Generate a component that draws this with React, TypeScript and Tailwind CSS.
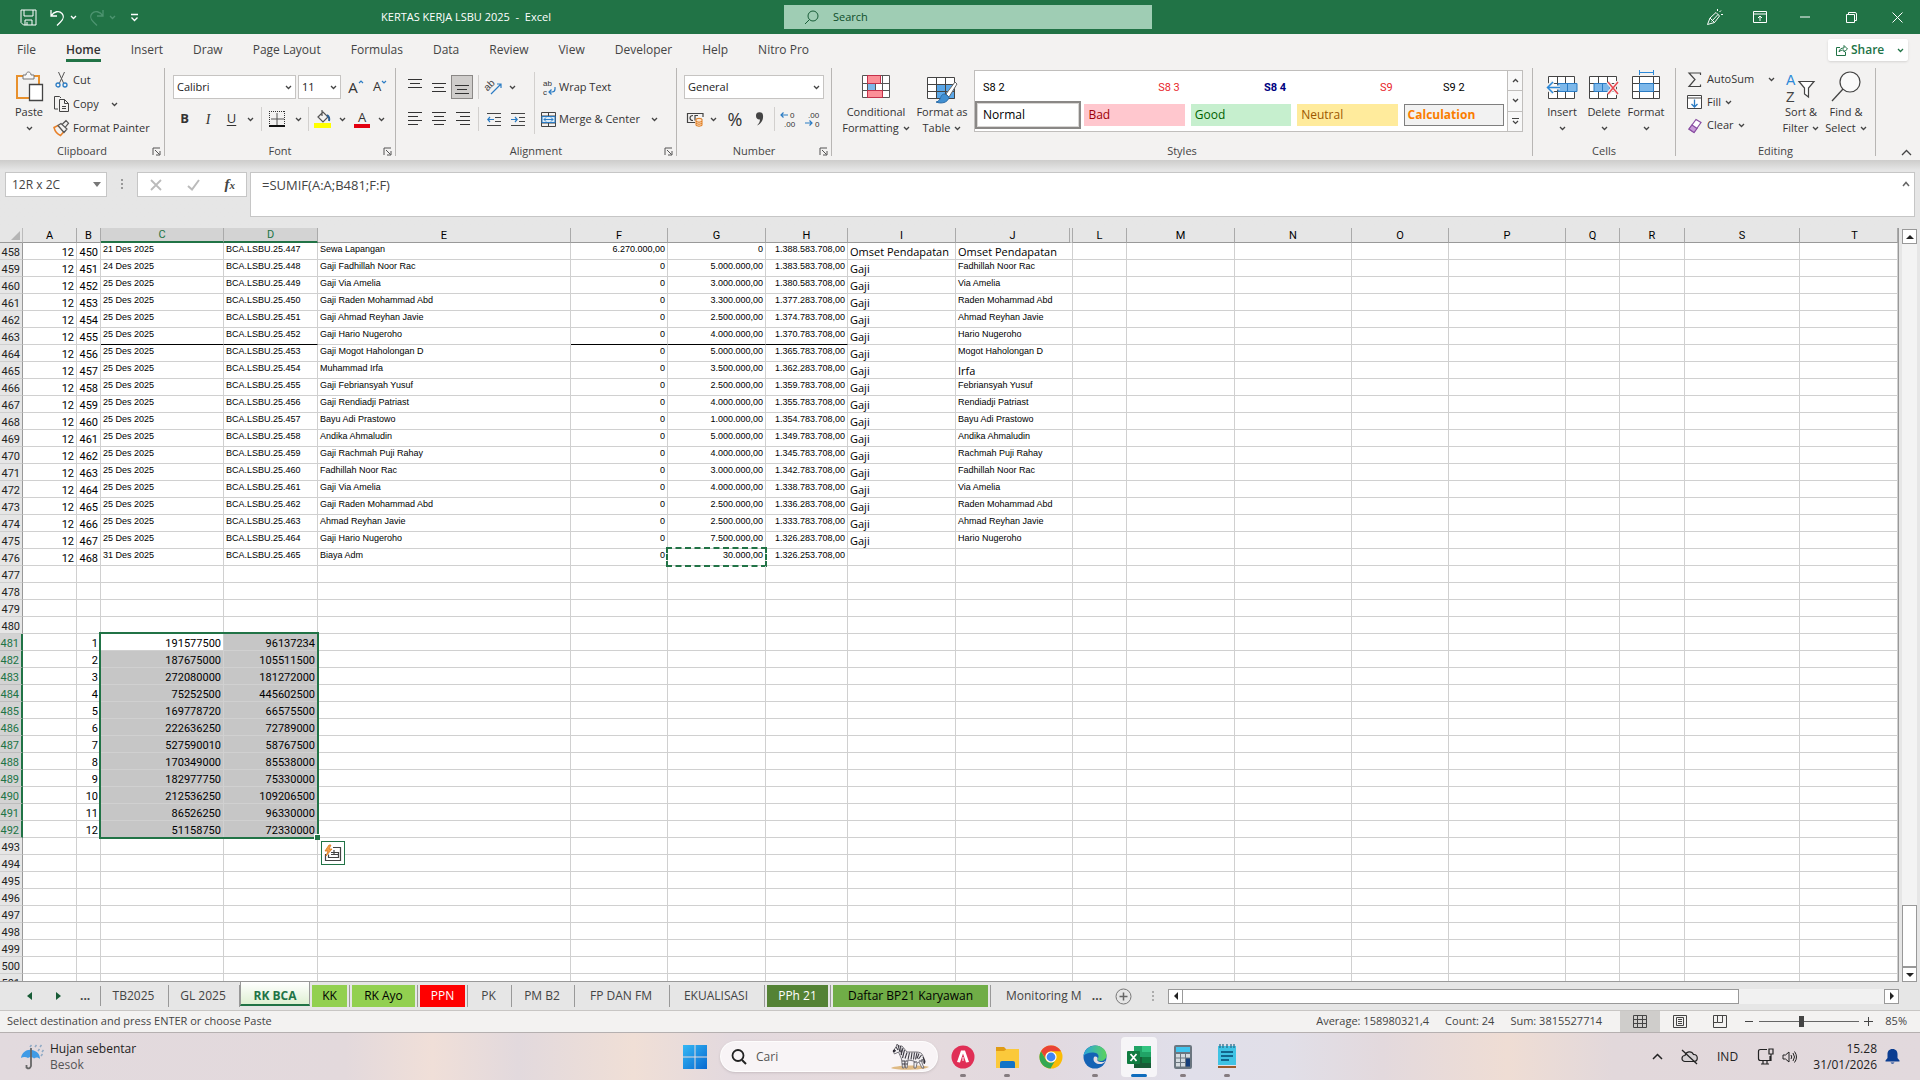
import React from "react";

const UI = "font-['Open_Sans','Noto_Sans',sans-serif]";

type Kids = { children?: React.ReactNode };

function Svg({ w, h, className = "", children, fill = "none" }: { w: number; h: number; className?: string; fill?: string } & Kids) {
  return (
    <svg width={w} height={h} viewBox={`0 0 ${w} ${h}`} fill={fill} className={`shrink-0 overflow-visible font-['Liberation_Sans',sans-serif] ${className}`} aria-hidden="true">
      {children}
    </svg>
  );
}

function Chev({ className = "text-[#444]" }: { className?: string }) {
  return (
    <Svg w={7} h={5} className={className}>
      <path d="M1 1l2.5 2.5L6 1" stroke="currentColor" strokeWidth="1.3" />
    </Svg>
  );
}

function Lines({ rows, top = 0 }: { rows: [number, number][]; top?: number }) {
  return (
    <Svg w={14} h={16}>
      {rows.map(([x, w], i) => (
        <rect key={i} x={x} y={top + i * 4} width={w} height="1" fill="#333" />
      ))}
    </Svg>
  );
}

function Launcher() {
  return (
    <button aria-label="Dialog launcher" className="absolute right-[3px] bottom-0">
      <Svg w={9} h={9}>
        <path d="M8 1H1v7M3 3l4.5 4.5M8 4v4H4" stroke="#555" />
      </Svg>
    </button>
  );
}

function Group({ label, className, launcher, children }: { label: string; className: string; launcher?: boolean } & Kids) {
  return (
    <section className={`relative flex h-[88px] flex-col border-r border-[#b8b6b4] ${className}`}>
      <div className="flex h-[78px] min-w-0 shrink-0">{children}</div>
      <h2 className="flex h-[10px] items-center justify-center text-[11px] leading-[10px] text-[#444]">{label}</h2>
      {launcher && <Launcher />}
    </section>
  );
}

function Slot({ className, label, children }: { className: string; label: string } & Kids) {
  return (
    <button aria-label={label} className={`flex h-6 shrink-0 items-center justify-center ${className}`}>
      {children}
    </button>
  );
}

function Sep({ className = "" }: { className?: string }) {
  return <span className={`h-6 w-px shrink-0 bg-[#d2d0ce] ${className}`} />;
}

function Big({ className, icon, lines, chevBelow }: { className: string; icon: React.ReactNode; lines: string[]; chevBelow?: boolean }) {
  return (
    <button className={`flex shrink-0 flex-col items-center pt-[2px] text-[11px] leading-4 text-[#333] ${className}`}>
      <span className="flex h-[34px] items-center">{icon}</span>
      {lines.map((l, i) => (
        <span key={l} className="flex items-center gap-1 whitespace-nowrap">
          {l}
          {!chevBelow && i === lines.length - 1 && <Chev />}
        </span>
      ))}
      {chevBelow && (
        <span className="flex h-4 items-center">
          <Chev />
        </span>
      )}
    </button>
  );
}

const menus = ["File", "Home", "Insert", "Draw", "Page Layout", "Formulas", "Data", "Review", "View", "Developer", "Help", "Nitro Pro"];

function TitleBar() {
  return (
    <header className="flex h-[34px] shrink-0 items-center bg-[#217346] text-white">
      <div className="flex flex-1 basis-0 items-center">
        <div className="flex w-[320px] items-center pl-5">
          <button aria-label="Save" className="w-[29px]">
            <Svg w={17} h={17}>
              <path d="M1 1h15v15H3.500L1 13.500zM4 1v6h9V1M5 16v-5h7v5M7 13v3" stroke="#fff" />
            </Svg>
          </button>
          <button aria-label="Undo" className="flex w-[39px] items-center gap-1">
            <Svg w={17} h={17}>
              <path d="M2 1v6h6M2 7C5 2.500 10 1 13 4.500s1 6-1.500 8.500L8 16.500" stroke="#fff" strokeWidth="1.300" />
            </Svg>
            <Chev className="text-white" />
          </button>
          <button aria-label="Redo" className="flex w-[42px] items-center gap-1">
            <Svg w={17} h={17}>
              <path d="M15 1v6H9M15 7C12 2.500 7 1 4 4.500s-1 6 1.500 8.500L9 16.500" stroke="#4d9470" strokeWidth="1.300" />
            </Svg>
            <Chev className="text-[#4d9470]" />
          </button>
          <button aria-label="Customize Quick Access Toolbar">
            <Svg w={9} h={9}>
              <path d="M1 1.500h7M1.500 4.500l3 3 3-3" stroke="#fff" strokeWidth="1.300" />
            </Svg>
          </button>
        </div>
        <h1 className="flex w-[292px] justify-center text-[11px] whitespace-pre">KERTAS KERJA LSBU 2025&nbsp; -&nbsp; Excel</h1>
      </div>
      <label className="ml-4 flex h-6 w-[368px] items-center bg-[#9fcdb4] pl-5 text-[#0e4d2a]">
        <Svg w={15} h={15}>
          <circle cx="9" cy="6" r="5" stroke="#185c37" />
          <path d="M5.500 9.500L1 14" stroke="#185c37" />
        </Svg>
        <input aria-label="Search" placeholder="Search" className="ml-[14px] w-60 bg-transparent text-[11px] outline-none placeholder:text-[#0e4d2a]" />
      </label>
      <div className="flex flex-1 basis-0 items-center justify-end">
        <button aria-label="Coming soon" className="flex w-[46px] justify-center">
          <Svg w={17} h={17}>
            <path d="M1.500 15.500L4 9l6-5.500 3.500 3.500-5 6.500zM4 9l4.500 4.500M5.500 12.500L12 5.500M11.500 0v2M15 1.500l-1.500 1.500M17 5.500h-2" stroke="#fff" />
          </Svg>
        </button>
        <button aria-label="Ribbon display options" className="flex w-[45px] justify-center">
          <Svg w={14} h={12}>
            <path d="M.5.5h13v11H.5zM.5 3h13M7 10V5M5 7l2-2 2 2" stroke="#fff" />
          </Svg>
        </button>
        <button aria-label="Minimize" className="flex w-[46px] justify-center">
          <Svg w={10} h={2}>
            <path d="M0 1h10" stroke="#fff" />
          </Svg>
        </button>
        <button aria-label="Restore" className="flex w-[46px] justify-center">
          <Svg w={11} h={11}>
            <path d="M.5 2.500h8v8h-8zM2.500 2V.5h6.500q1.500 0 1.500 1.500v6.500H9" stroke="#fff" />
          </Svg>
        </button>
        <button aria-label="Close" className="flex w-[46px] justify-center">
          <Svg w={11} h={11}>
            <path d="M.5.5l10 10M10.500.5l-10 10" stroke="#fff" />
          </Svg>
        </button>
      </div>
    </header>
  );
}

function MenuBar() {
  return (
    <nav className="flex h-[30px] shrink-0 items-center bg-[#f3f2f1] pt-0.5 pr-[12px] pl-[17px]">
      <div className="flex h-full flex-1 items-center gap-[30px]">
        {menus.map((m) =>
          m === "Home" ? (
            <button key={m} className="relative h-full text-[12px] font-semibold text-[#333]">
              {m}
              <span className="absolute inset-x-0 bottom-[2px] h-[3px] bg-[#217346]" />
            </button>
          ) : (
            <button key={m} className="text-[12px] text-[#444]">
              {m}
            </button>
          )
        )}
      </div>
      <button className="flex h-[22px] w-[80px] items-center rounded-xs bg-white pl-2 text-[12px] font-semibold text-[#217346] shadow-sm">
        <Svg w={12} h={12} className="mr-[3px]">
          <path d="M4 3.500H.5v8h9V8M3 8c.5-3 2-4 5-4V1.500L11.500 5 8 8V6C6 6 4 6.500 3 8z" stroke="#217346" />
        </Svg>
        Share
        <span className="ml-auto pr-1">
          <Chev className="text-[#217346]" />
        </span>
      </button>
    </nav>
  );
}

function ClipboardGroup() {
  return (
    <Group label="Clipboard" className="w-[165px]" launcher>
      <Big
        className="ml-2 w-[42px]"
        chevBelow
        lines={["Paste"]}
        icon={
          <Svg w={29} h={32}>
            <path d="M8 5H2v22h12M18 5h6v8" stroke="#e8912d" strokeWidth="2" />
            <path d="M8 7V4h3c0-4 5-4 5 0h3v4H8z" fill="#f8f8f8" stroke="#777" />
            <path d="M14.500 13.500h13v16h-13z" fill="#fff" stroke="#444" strokeWidth="1.300" />
          </Svg>
        }
      />
      <div className="ml-1 flex flex-col text-[11px] text-[#333]">
        <button className="flex h-6 items-center gap-1">
          <Svg w={15} h={16}>
            <path d="M4.500 0l5 11M10.500 0l-5 11" stroke="#555" />
            <circle cx="4" cy="13" r="2" stroke="#2b7cc4" strokeWidth="1.300" />
            <circle cx="11" cy="13" r="2" stroke="#2b7cc4" strokeWidth="1.300" />
          </Svg>
          Cut
        </button>
        <button className="flex h-6 items-center gap-1">
          <Svg w={15} h={16}>
            <path d="M4 13H.5V.5h5l1.500 1.500M5.500 3.500h5l4 4v8h-9zM10.500 3.500v4h4M8 10.500h4M8 12.500h4" stroke="#444" />
          </Svg>
          Copy
          <span className="ml-2">
            <Chev />
          </span>
        </button>
        <button className="flex h-6 items-center gap-1">
          <Svg w={15} h={16}>
            <path d="M0 7.500l4-2 6 6L6.500 15.500C3 14 1 11.500 0 7.500z" fill="#f3f2f1" stroke="#e8812a" strokeWidth="1.500" />
            <path d="M4 5.500l3-2 6 5.500-3 3.500zM8.500 4L12 .7l2.500 2.500L11.500 7" fill="#f3f2f1" stroke="#555" strokeWidth="1.200" />
          </Svg>
          Format Painter
        </button>
      </div>
    </Group>
  );
}

function Combo({ value, label, className }: { value: string; label: string; className: string }) {
  return (
    <span className={`relative flex h-6 shrink-0 items-center border border-[#c6c4c2] bg-white ${className}`}>
      <select aria-label={label} className="h-full w-full appearance-none bg-transparent pl-[3px] text-[11px] text-[#222] outline-none">
        <option>{value}</option>
      </select>
      <span className="pointer-events-none absolute right-[3px]">
        <Chev />
      </span>
    </span>
  );
}

function FontGroup() {
  return (
    <Group label="Font" className="w-[231px]" launcher>
      <div className="flex flex-col gap-2 pt-[7px] pl-2 text-[#333]">
        <div className="flex">
          <Combo label="Font" value="Calibri" className="w-[123px]" />
          <Combo label="Font size" value="11" className="ml-0.5 w-[43px]" />
          <Slot label="Increase font size" className="ml-[3px] w-6">
            <span className="text-[15px]">A</span>
            <Svg w={6} h={16}>
              <path d="M1 4l2-2 2 2" stroke="#2b7cc4" strokeWidth="1.200" />
            </Svg>
          </Slot>
          <Slot label="Decrease font size" className="w-6">
            <span className="text-[13px]">A</span>
            <Svg w={6} h={16}>
              <path d="M1 2l2 2 2-2" stroke="#2b7cc4" strokeWidth="1.200" />
            </Svg>
          </Slot>
        </div>
        <div className="flex">
          <Slot label="Bold" className="w-[23px] text-[13px] font-bold">B</Slot>
          <Slot label="Italic" className="w-6 font-['Liberation_Serif',serif] text-[14px] italic">I</Slot>
          <Slot label="Underline" className="w-[23px] text-[13px] underline underline-offset-2">U</Slot>
          <Slot label="Underline options" className="mr-1 w-[14px]"><Chev /></Slot>
          <Sep />
          <Slot label="Borders" className="w-[30px]">
            <Svg w={16} h={16}>
              <path d="M.5 0v14M15.500 0v14M0 .5h16" stroke="#333" strokeDasharray="1 1" />
              <path d="M8 2v13M2 8h13" stroke="#555" />
              <path d="M0 15h16" stroke="#111" strokeWidth="2" />
            </Svg>
          </Slot>
          <Slot label="Border options" className="mr-1 w-3"><Chev /></Slot>
          <Sep />
          <Slot label="Fill color" className="ml-px w-6">
            <Svg w={17} h={18}>
              <path d="M4 7l5-5 5 5-5 5zM8 0v6" stroke="#555" strokeWidth="1.200" />
              <path d="M13 5q3 2 2 6" stroke="#2b5f94" strokeWidth="2" />
              <rect y="13" width="17" height="5" fill="#ffff00" />
            </Svg>
          </Slot>
          <Slot label="Fill options" className="w-4"><Chev /></Slot>
          <Slot label="Font color" className="w-6">
            <span className="flex flex-col items-center">
              <span className="text-[13px] leading-[13px]">A</span>
              <span className="h-1 w-4 bg-[#e3000f]" />
            </span>
          </Slot>
          <Slot label="Font color options" className="w-[14px]"><Chev /></Slot>
        </div>
      </div>
    </Group>
  );
}

const full: [number, number][] = [[0, 14], [0, 10], [0, 14], [0, 10]];
const mid: [number, number][] = [[0, 14], [2, 10], [0, 14], [2, 10]];
const end: [number, number][] = [[0, 14], [4, 10], [0, 14], [4, 10]];
const tri: [number, number][] = [[0, 14], [2, 10], [0, 14]];

function AlignmentGroup() {
  return (
    <Group label="Alignment" className="w-[281px]" launcher>
      <div className="flex flex-col gap-2 pt-[7px] pl-[7px]">
        <div className="flex">
          <Slot label="Top align" className="w-6"><Lines rows={tri} /></Slot>
          <Slot label="Middle align" className="w-6"><Lines rows={tri} top={4} /></Slot>
          <Slot label="Bottom align" className="w-[22px] border border-[#8a8886] bg-[#cfcdcb]"><Lines rows={tri} top={6} /></Slot>
          <span className="w-[5px]" />
          <Sep />
          <Slot label="Orientation" className="w-[30px]">
            <Svg w={17} h={16}>
              <text x="0" y="9" fontSize="10" fill="#444" transform="rotate(-45 5 9)">ab</text>
              <path d="M5 15L15 5M11 5h4v4" stroke="#2b7cc4" strokeWidth="1.200" />
            </Svg>
          </Slot>
          <Slot label="Orientation options" className="w-[6px]"><Chev /></Slot>
        </div>
        <div className="flex">
          <Slot label="Align left" className="w-6"><Lines rows={full} top={1} /></Slot>
          <Slot label="Center" className="w-6"><Lines rows={mid} top={1} /></Slot>
          <Slot label="Align right" className="w-6"><Lines rows={end} top={1} /></Slot>
          <span className="w-[3px]" />
          <Sep />
          <Slot label="Decrease indent" className="ml-[3px] w-6">
            <Svg w={14} h={14}>
              <path d="M0 1.500h14M8 5.500h6M8 9.500h6M0 13.500h14" stroke="#444" />
              <path d="M7 7.500H1M3 5L.8 7.500 3 10" stroke="#2b7cc4" strokeWidth="1.200" />
            </Svg>
          </Slot>
          <Slot label="Increase indent" className="w-6">
            <Svg w={14} h={14}>
              <path d="M0 1.500h14M8 5.500h6M8 9.500h6M0 13.500h14" stroke="#444" />
              <path d="M0 7.500h6M4 5l2.200 2.500L4 10" stroke="#2b7cc4" strokeWidth="1.200" />
            </Svg>
          </Slot>
        </div>
      </div>
      <span className="mt-1 ml-1 h-[62px] w-px bg-[#d2d0ce]" />
      <div className="flex flex-1 flex-col gap-2 pt-[7px] pl-[6px] text-[11px] text-[#333]">
        <button className="flex h-6 items-center gap-[3px]">
          <Svg w={15} h={16}>
            <text x="2" y="7" fontSize="8" fill="#333">ab</text>
            <text x="2" y="16" fontSize="8" fill="#333">c</text>
            <path d="M14 8v2q0 3-3 3H8M10.500 10.500L8 13l2.500 2.500" stroke="#2b7cc4" strokeWidth="1.200" />
          </Svg>
          Wrap Text
        </button>
        <button className="flex h-6 items-center gap-[3px] whitespace-nowrap">
          <Svg w={15} h={15}>
            <path d="M.5.5h14v14H.5zM.5 4h14M.5 11h14M7.500.5V4M7.500 11v3.500" stroke="#444" />
            <rect x="1" y="4.500" width="13" height="6" fill="#dcecf9" stroke="#2b7cc4" />
            <path d="M3 7.500h9M5 5.500l-2 2 2 2M10 5.500l2 2-2 2" stroke="#2b7cc4" />
          </Svg>
          Merge &amp; Center
          <span className="ml-2">
            <Chev />
          </span>
        </button>
      </div>
    </Group>
  );
}

function NumberGroup() {
  return (
    <Group label="Number" className="w-[155px]" launcher>
      <div className="flex flex-col gap-2 pt-[7px] pl-[7px] text-[#333]">
        <Combo label="Number format" value="General" className="w-[140px]" />
        <div className="flex">
          <Slot label="Accounting format" className="w-[22px]">
            <Svg w={17} h={16}>
              <path d="M16 6V2.500H.5v9H8M6 4.500q-3 0-3 2.500t3 2.500M8 9.500v-5h3" stroke="#444" strokeWidth="1.200" />
              <path d="M9 8v6.500q3 1.500 6 0V8q-3-1.500-6 0zM9 10.500q3 1.500 6 0M9 12.500q3 1.500 6 0" fill="#fbe3cc" stroke="#e07a1b" />
            </Svg>
          </Slot>
          <Slot label="Accounting options" className="w-[14px]"><Chev /></Slot>
          <Slot label="Percent style" className="ml-[3px] w-6 text-[18px]">%</Slot>
          <Slot label="Comma style" className="w-6">
            <Svg w={9} h={14}>
              <path d="M1 4a3.500 3.500 0 017-.5c.5 4-1.500 8-6 10 2-2 2.800-3.500 3-6C3 8 1 6.500 1 4z" fill="#444" />
            </Svg>
          </Slot>
          <Sep className="ml-[3px]" />
          <Slot label="Increase decimal" className="ml-px w-6">
            <Svg w={16} h={18}>
              <path d="M8 5H1M3.500 2.500L1 5l2.500 2.500" stroke="#2b7cc4" strokeWidth="1.200" />
              <text x="10" y="8" fontSize="8" fill="#333">0</text>
              <text x="4" y="17" fontSize="8" fill="#333">.00</text>
            </Svg>
          </Slot>
          <Slot label="Decrease decimal" className="w-6">
            <Svg w={16} h={18}>
              <text x="4" y="8" fontSize="8" fill="#333">.00</text>
              <path d="M1 13h7M5.500 10.500L8 13l-2.500 2.500" stroke="#2b7cc4" strokeWidth="1.200" />
              <text x="11" y="17" fontSize="8" fill="#333">0</text>
            </Svg>
          </Slot>
        </div>
      </div>
    </Group>
  );
}

function StylesGroup() {
  return (
    <Group label="Styles" className="min-w-0 flex-1">
      <Big
        className="ml-[10px] w-[68px]"
        lines={["Conditional", "Formatting"]}
        icon={
          <Svg w={28} h={26}>
            <path d="M.5 1.500h27v22H.5z" fill="#fff" />
            <path d="M6 1.500h12v8H6zM6 16.500h14v7H6z" fill="#fb8f97" />
            <path d="M6 9.500h7v7H6z" fill="#7db8ea" />
            <path d="M.5 1.500h27v22H.5zM.5 9.500h27M.5 16.500h27M5.500 1.500v22M13.500 9.500v7M20.500 1.500v22" stroke="#555" />
            <path d="M5.500 1.500h13v8h-13zM5.500 16.500h15v7h-15z" stroke="#c4314b" />
          </Svg>
        }
      />
      <Big
        className="w-16"
        lines={["Format as", "Table"]}
        icon={
          <Svg w={30} h={30} className="-mb-1">
            <path d="M.5 3.500h27v21H.5z" fill="#fff" />
            <path d="M10 10h18v15H10z" fill="#5aa7e8" />
            <path d="M.5 3.500h27v21H.5zM.5 10.500h27M.5 17.500h27M9.500 3.500v21M18.500 3.500v21" stroke="#444" />
            <path d="M28 8l-9 12 3 3 8-13z" fill="#fff" stroke="#666" />
            <path d="M18 20c-4 0-4 3-5 5s-3 3-4 3c5 2 12 1 13-5z" fill="#3f8fd2" stroke="#2b6ca8" />
          </Svg>
        }
      />
      <div className="mt-[2px] mr-[9px] flex h-[62px] min-w-0 flex-1 border border-[#c0bebc] bg-white font-['Roboto',sans-serif]">
        <div className="grid min-w-0 flex-1 grid-cols-5 content-start text-[11px] text-black">
          <button className="h-[30px] px-2 pt-1 text-left">S8 2</button>
          <button className="h-[30px] px-2 pt-1 text-right text-[#e8262b]">S8 3</button>
          <button className="h-[30px] px-2 pt-1 text-right font-bold text-[#000080]">S8 4</button>
          <button className="h-[30px] px-2 pt-1 text-right text-[#e8262b]">S9</button>
          <button className="h-[30px] px-2 pt-1 text-center">S9 2</button>
          <button className="h-7 border-2 border-[#8a8886] px-[6px] text-left font-['Open_Sans',sans-serif] text-[12px] ring-1 ring-[#d8d6d4] ring-inset">Normal</button>
          <button className="mx-[3px] mt-[3px] h-[22px] bg-[#ffc7ce] px-1 text-left font-['Open_Sans',sans-serif] text-[12px] text-[#9c0006]">Bad</button>
          <button className="mx-[3px] mt-[3px] h-[22px] bg-[#c6efce] px-1 text-left font-['Open_Sans',sans-serif] text-[12px] text-[#006100]">Good</button>
          <button className="mx-[3px] mt-[3px] h-[22px] bg-[#ffeb9c] px-1 text-left font-['Open_Sans',sans-serif] text-[12px] text-[#9c5700]">Neutral</button>
          <button className="mx-[3px] mt-[3px] h-[22px] border border-[#7f7f7f] bg-[#f2f2f2] px-[3px] text-left font-['Open_Sans',sans-serif] text-[12px] font-bold text-[#fa7d00]">Calculation</button>
        </div>
        <div className="flex w-[15px] flex-col divide-y divide-[#c0bebc] border-l border-[#c0bebc] bg-[#f8f8f8]">
          <button aria-label="Styles up" className="flex flex-1 items-center justify-center"><Chev className="rotate-180 text-[#444]" /></button>
          <button aria-label="Styles down" className="flex flex-1 items-center justify-center"><Chev /></button>
          <button aria-label="More styles" className="flex flex-1 items-center justify-center">
            <Svg w={7} h={7}>
              <path d="M0 .5h7M1 3l2.500 2.500L6 3" stroke="#444" strokeWidth="1.200" />
            </Svg>
          </button>
        </div>
      </div>
    </Group>
  );
}

function CellsGroup() {
  return (
    <Group label="Cells" className="w-[143px]">
      <Big
        className="ml-2 w-[42px]"
        chevBelow
        lines={["Insert"]}
        icon={
          <Svg w={32} h={26}>
            <path d="M2.500 2.500h26v22h-26zM2.500 9.500h26M2.500 17.500h26M11.500 2.500v22M19.500 2.500v22" fill="#fff" stroke="#444" />
            <path d="M12 9.500h19v8H12z" fill="#7db8ea" stroke="#2b7cc4" />
            <path d="M21.500 9.500v8" stroke="#2b7cc4" />
            <path d="M14 13.500H1M7 7.500l-6 6 6 6" stroke="#f3f2f1" strokeWidth="4" />
            <path d="M14 13.500H1.500M7 8l-5.500 5.500L7 19" stroke="#2b88d8" strokeWidth="1.500" />
          </Svg>
        }
      />
      <Big
        className="w-[42px]"
        chevBelow
        lines={["Delete"]}
        icon={
          <Svg w={32} h={26}>
            <path d="M1.500 2.500h27v22h-27zM1.500 9.500h27M1.500 17.500h27M10.500 2.500v22M19.500 2.500v22" fill="#fff" stroke="#444" />
            <path d="M6 9.500h16v8H6z" fill="#7db8ea" stroke="#2b7cc4" />
            <path d="M14.500 9.500v8" stroke="#2b7cc4" />
            <path d="M20 8l10 12M30 8L20 20" stroke="#f3f2f1" strokeWidth="4" />
            <path d="M20 8l10 12M30 8L20 20" stroke="#e8474f" strokeWidth="1.500" />
          </Svg>
        }
      />
      <Big
        className="w-[42px]"
        chevBelow
        lines={["Format"]}
        icon={
          <Svg w={29} h={30} className="-mt-1">
            <path d="M7 2.500h15M7.500 0v5M21.500 0v5" stroke="#2b88d8" />
            <path d="M.5 6.500h27v22H.5zM.5 13.500h27M.5 21.500h27M7.500 6.500v22M21.500 6.500v22" fill="#fff" stroke="#444" />
            <path d="M7.500 13.500h14v8h-14z" fill="#7db8ea" stroke="#2b7cc4" />
          </Svg>
        }
      />
    </Group>
  );
}

function EditingGroup() {
  return (
    <Group label="Editing" className="w-[200px]">
      <div className="ml-[11px] flex w-[92px] flex-col text-[11px] text-[#333]">
        <button className="flex h-[23px] items-center gap-1 pr-1">
          <Svg w={16} h={16}>
            <path d="M13.500 3V1H2l6 6.500L2 14.500h11.500v-2" stroke="#444" strokeWidth="1.200" />
          </Svg>
          AutoSum
          <span className="ml-auto"><Chev /></span>
        </button>
        <button className="flex h-[23px] items-center gap-1">
          <Svg w={16} h={15}>
            <path d="M.5.5h14v13H.5zM.5 3h14" fill="#fff" stroke="#444" />
            <path d="M7.500 4.500V12M4.500 9l3 3 3-3" stroke="#2b7cc4" strokeWidth="1.300" />
          </Svg>
          Fill
          <Chev />
        </button>
        <button className="flex h-[23px] items-center gap-1">
          <Svg w={16} h={16}>
            <path d="M9 1.500l5 3-7 10-5-3.500z" fill="#fff" stroke="#8a4fa3" strokeWidth="1.200" />
            <path d="M5 7l5 3.500-3 4-5-3.500z" fill="#c89bd8" stroke="#8a4fa3" strokeWidth="1.200" />
          </Svg>
          Clear
          <Chev />
        </button>
      </div>
      <Big
        className="w-[44px]"
        lines={["Sort &", "Filter"]}
        icon={
          <Svg w={30} h={32}>
            <text x="0" y="14" fontSize="14" fill="#2b88d8">A</text>
            <text x="0" y="31" fontSize="14" fill="#444">Z</text>
            <path d="M13 10.500h15L22.500 17v9l-4-3v-6z" fill="#fff" stroke="#444" strokeWidth="1.200" />
          </Svg>
        }
      />
      <Big
        className="w-[46px]"
        lines={["Find &", "Select"]}
        icon={
          <Svg w={30} h={32}>
            <circle cx="19" cy="11" r="10" fill="#fafafa" stroke="#444" strokeWidth="1.200" />
            <path d="M12 18L1 30" stroke="#444" strokeWidth="1.300" />
          </Svg>
        }
      />
    </Group>
  );
}

function Ribbon() {
  return (
    <div className="flex h-24 shrink-0 items-start bg-[#f3f2f1] pt-1">
      <ClipboardGroup />
      <FontGroup />
      <AlignmentGroup />
      <NumberGroup />
      <StylesGroup />
      <CellsGroup />
      <EditingGroup />
      <div className="flex h-full w-[44px] items-end justify-end pr-[8px] pb-1">
        <button aria-label="Collapse the Ribbon" className="flex">
          <Svg w={11} h={7}>
            <path d="M1 6l4.500-4.500L10 6" stroke="#444" strokeWidth="1.300" />
          </Svg>
        </button>
      </div>
    </div>
  );
}

function FormulaBar() {
  return (
    <div className="flex h-[68px] shrink-0 items-start bg-linear-to-b from-[#cdcccb] via-[#e6e6e6] via-15% to-[#e6e6e6] pt-3 pr-[5px] pl-[5px] text-[#444]">
      <label className="flex h-[25px] w-[102px] items-center border border-[#c6c6c6] bg-white">
        <input aria-label="Name Box" defaultValue="12R x 2C" className="w-[76px] bg-transparent pl-[6px] text-[12px] outline-none" />
        <Svg w={8} h={5} className="ml-[11px]">
          <path d="M0 0h8L4 5z" fill="#777" />
        </Svg>
      </label>
      <span className="flex h-[25px] w-[30px] items-center justify-center">
        <Svg w={2} h={12}>
          <path d="M0 1h2M0 5h2M0 9h2" stroke="#999" strokeWidth="2" />
        </Svg>
      </span>
      <div className="flex h-[25px] w-[110px] items-center justify-between border border-[#c6c6c6] bg-white pr-[11px] pl-3">
        <button aria-label="Cancel">
          <Svg w={12} h={12}>
            <path d="M1 1l10 10M11 1L1 11" stroke="#bbb" strokeWidth="1.800" />
          </Svg>
        </button>
        <button aria-label="Enter">
          <Svg w={13} h={12}>
            <path d="M1 7l4 3.500L12 1" stroke="#bbb" strokeWidth="2" />
          </Svg>
        </button>
        <button aria-label="Insert function" className="font-['Liberation_Serif',serif] text-[15px] font-bold italic">
          f<span className="text-[11px]">x</span>
        </button>
      </div>
      <div className="ml-[3px] flex h-[45px] flex-1 items-start border border-[#c6c6c6] bg-white">
        <input aria-label="Formula Bar" defaultValue="=SUMIF(A:A;B481;F:F)" className="h-[23px] flex-1 bg-transparent pl-[11px] text-[13px] outline-none" />
        <button aria-label="Collapse formula bar" className="mt-2 mr-1 flex">
          <Svg w={8} h={6}>
            <path d="M1 5l3-3.500L7 5" stroke="#666" strokeWidth="1.500" />
          </Svg>
        </button>
      </div>
    </div>
  );
}

type Row = [string, string, string, string, string];

const ledger: Row[] = [
  ["21 Des 2025", "Sewa Lapangan", "0", "1.388.583.708,00", "Omset Pendapatan"],
  ["24 Des 2025", "Gaji Fadhillah Noor Rac", "5.000.000,00", "1.383.583.708,00", "Fadhillah Noor Rac"],
  ["25 Des 2025", "Gaji Via Amelia", "3.000.000,00", "1.380.583.708,00", "Via Amelia"],
  ["25 Des 2025", "Gaji Raden Mohammad Abd", "3.300.000,00", "1.377.283.708,00", "Raden Mohammad Abd"],
  ["25 Des 2025", "Gaji Ahmad Reyhan Javie", "2.500.000,00", "1.374.783.708,00", "Ahmad Reyhan Javie"],
  ["25 Des 2025", "Gaji Hario Nugeroho", "4.000.000,00", "1.370.783.708,00", "Hario Nugeroho"],
  ["25 Des 2025", "Gaji Mogot Haholongan D", "5.000.000,00", "1.365.783.708,00", "Mogot Haholongan D"],
  ["25 Des 2025", "Muhammad Irfa", "3.500.000,00", "1.362.283.708,00", "Irfa"],
  ["25 Des 2025", "Gaji Febriansyah Yusuf", "2.500.000,00", "1.359.783.708,00", "Febriansyah Yusuf"],
  ["25 Des 2025", "Gaji Rendiadji Patriast", "4.000.000,00", "1.355.783.708,00", "Rendiadji Patriast"],
  ["25 Des 2025", "Bayu Adi Prastowo", "1.000.000,00", "1.354.783.708,00", "Bayu Adi Prastowo"],
  ["25 Des 2025", "Andika Ahmaludin", "5.000.000,00", "1.349.783.708,00", "Andika Ahmaludin"],
  ["25 Des 2025", "Gaji Rachmah Puji Rahay", "4.000.000,00", "1.345.783.708,00", "Rachmah Puji Rahay"],
  ["25 Des 2025", "Fadhillah Noor Rac", "3.000.000,00", "1.342.783.708,00", "Fadhillah Noor Rac"],
  ["25 Des 2025", "Gaji Via Amelia", "4.000.000,00", "1.338.783.708,00", "Via Amelia"],
  ["25 Des 2025", "Gaji Raden Mohammad Abd", "2.500.000,00", "1.336.283.708,00", "Raden Mohammad Abd"],
  ["25 Des 2025", "Ahmad Reyhan Javie", "2.500.000,00", "1.333.783.708,00", "Ahmad Reyhan Javie"],
  ["25 Des 2025", "Gaji Hario Nugeroho", "7.500.000,00", "1.326.283.708,00", "Hario Nugeroho"],
  ["31 Des 2025", "Biaya Adm", "30.000,00", "1.326.253.708,00", ""],
];

const sums: [string, string][] = [
  ["191577500", "96137234"],
  ["187675000", "105511500"],
  ["272080000", "181272000"],
  ["75252500", "445602500"],
  ["169778720", "66575500"],
  ["222636250", "72789000"],
  ["527590010", "58767500"],
  ["170349000", "85538000"],
  ["182977750", "75330000"],
  ["212536250", "109206500"],
  ["86526250", "96330000"],
  ["51158750", "72330000"],
];

const columns = ["A", "B", "C", "D", "E", "F", "G", "H", "I", "J", "L", "M", "N", "O", "P", "Q", "R", "S", "T"];
const rowNumbers = Array.from({ length: 44 }, (_, i) => 458 + i);

const CELL = "h-[17px] overflow-visible border-r border-b border-[#d0d0d0] p-0 whitespace-nowrap";
const SMALL = "px-[2px] align-top font-['Liberation_Sans',sans-serif] text-[9px] leading-[12px]";
const NUM = "pr-[2px] text-right align-bottom text-[11px] leading-[13px]";
const WIDE = "pl-[2px] align-bottom font-['Open_Sans',sans-serif] text-[11px] leading-[15px]";

function GridRow({ n }: { n: number }) {
  const i = n - 458;
  const entry = ledger[i];
  const s = n - 481;
  const sum = sums[s];
  const thick = n === 463 ? "border-b-black" : "";
  return (
    <tr className="h-[17px]">
      <th
        scope="row"
        className={`h-[17px] border-b p-0 pr-[2px] text-right align-bottom text-[11px] leading-[13px] font-normal ${
          sum ? "border-r-2 border-r-[#217346] border-b-[#bdbdbd] bg-[#d3d3d3] text-[#217346]" : "border-r border-r-[#999] border-b-[#cfcfcf] bg-[#e6e6e6] text-[#222]"
        }`}
      >
        {n}
      </th>
      <td className={`${CELL} ${NUM}`}>{entry ? 12 : ""}</td>
      <td className={`${CELL} ${NUM} ${sum ? "border-r-[#217346]" : ""}`}>{entry ? 450 + i : sum ? s + 1 : ""}</td>
      {sum ? (
        <>
          <td className={`${CELL} ${NUM} relative ${s === 0 ? "bg-white" : "border-[#aaa] bg-[#c6c6c6]"}`}>
            {sum[0]}
            {s === 0 && (
              <span className="pointer-events-none absolute top-[-2px] left-[-2px] z-10 h-[207px] w-[220px] border-2 border-[#217346]">
                <span className="absolute right-[-3px] bottom-[-3px] h-[6px] w-[6px] border-t border-l border-white bg-[#217346]" />
                <button aria-label="Quick Analysis" className="pointer-events-auto absolute top-[207px] left-[220px] flex h-6 w-6 items-center justify-center border border-[#217346] bg-white">
                  <Svg w={18} h={18}>
                    <path d="M9 3.500h7.500v13h-15V10M7 8.500h7.500v5H4.500v-3M10 6v5M7 10.500h7" stroke="#444" strokeWidth="1.200" />
                    <path d="M5 1L1 7h3l-2 5 6-7H5l2-4z" fill="#f2a14a" stroke="#d9761a" strokeWidth=".8" />
                  </Svg>
                </button>
              </span>
            )}
          </td>
          <td className={`${CELL} ${NUM} border-[#aaa] bg-[#c6c6c6]`}>{sum[1]}</td>
        </>
      ) : (
        <>
          <td className={`${CELL} ${SMALL} ${thick}`}>{entry?.[0]}</td>
          <td className={`${CELL} ${SMALL} ${thick}`}>{entry && `BCA.LSBU.25.${447 + i}`}</td>
        </>
      )}
      <td className={`${CELL} ${SMALL}`}>{entry?.[1]}</td>
      <td className={`${CELL} ${SMALL} ${thick} text-right`}>{entry && (i === 0 ? "6.270.000,00" : "0")}</td>
      <td className={`${CELL} ${SMALL} ${thick} relative text-right`}>
        {entry?.[2]}
        {n === 476 && <span className="absolute top-[-2px] right-[-2px] bottom-[-2px] left-[-2px] border-2 border-dashed border-[#217346]" />}
      </td>
      <td className={`${CELL} ${SMALL} ${thick} text-right`}>{entry?.[3]}</td>
      <td className={`${CELL} ${WIDE}`}>{entry && (i === 0 ? "Omset Pendapatan" : i < 18 ? "Gaji" : "")}</td>
      <td className={`${CELL} ${i === 0 || i === 7 ? WIDE : SMALL}`}>{entry?.[4]}</td>
      {columns.slice(10).map((c) => (
        <td key={c} className={CELL} />
      ))}
    </tr>
  );
}

function ArrowButton({ dir, className }: { dir: string; className: string }) {
  return (
    <button aria-label={`Scroll ${dir}`} className={`flex shrink-0 items-center justify-center border border-[#999] bg-white ${className}`}>
      <Svg w={8} h={8}>
        {dir === "up" && <path d="M0 6l4-4 4 4z" fill="#222" />}
        {dir === "down" && <path d="M0 2l4 4 4-4z" fill="#222" />}
        {dir === "left" && <path d="M6 0L2 4l4 4z" fill="#222" />}
        {dir === "right" && <path d="M2 0l4 4-4 4z" fill="#222" />}
      </Svg>
    </button>
  );
}

function Sheet() {
  return (
    <div className="flex min-h-0 flex-1 bg-[#e6e6e6]">
      <div className="min-w-0 flex-1 overflow-hidden border-r border-b border-[#999]">
        <table className="w-full table-fixed border-separate border-spacing-0 bg-white font-['Roboto',sans-serif] text-black">
          <colgroup>
            <col className="w-[23px]" />
            <col className="w-[54px]" />
            <col className="w-[24px]" />
            <col className="w-[123px]" />
            <col className="w-[94px]" />
            <col className="w-[253px]" />
            <col className="w-[97px]" />
            <col className="w-[98px]" />
            <col className="w-[82px]" />
            <col className="w-[108px]" />
            <col className="w-[117px]" />
            <col className="w-[54px]" />
            <col className="w-[108px]" />
            <col className="w-[117px]" />
            <col className="w-[97px]" />
            <col className="w-[117px]" />
            <col className="w-[54px]" />
            <col className="w-[65px]" />
            <col className="w-[115px]" />
            <col />
          </colgroup>
          <thead>
            <tr className="h-[15px]">
              <th className="h-[15px] border-r border-b border-r-[#bbb] border-b-[#999] bg-[#e6e6e6] p-0">
                <Svg w={9} h={9} className="mr-[2px] ml-auto">
                  <path d="M9 0v9H0z" fill="#b5b5b5" />
                </Svg>
              </th>
              {columns.map((c) => (
                <th
                  key={c}
                  scope="col"
                  className={`h-[15px] py-0 pr-0 text-[11px] leading-[13px] font-normal ${c === "T" ? "pl-3" : "pl-0"} ${
                    c === "C" || c === "D"
                      ? "border-r border-b-2 border-r-[#aaa] border-b-[#217346] bg-[#d3d3d3] text-[#217346]"
                      : c === "J"
                        ? "border-r-4 border-b border-double border-r-[#aaa] border-b-[#999] bg-[#e6e6e6]"
                        : "border-r border-b border-r-[#aaa] border-b-[#999] bg-[#e6e6e6]"
                  }`}
                >
                  {c}
                </th>
              ))}
            </tr>
          </thead>
          <tbody>
            {rowNumbers.map((n) => (
              <GridRow key={n} n={n} />
            ))}
          </tbody>
        </table>
      </div>
      <div className="flex w-[21px] flex-col items-end pt-px pr-[3px]">
        <ArrowButton dir="up" className="h-[15px] w-[15px]" />
        <div className="flex w-[15px] flex-1 flex-col justify-end bg-[#f3f3f3]">
          <div className="h-[62px] border border-[#999] bg-white" />
        </div>
        <ArrowButton dir="down" className="h-[15px] w-[15px]" />
      </div>
    </div>
  );
}

const sheets: { name: string; cls: string; inner?: string }[] = [
  { name: "TB2025", cls: "w-[68px]" },
  { name: "GL 2025", cls: "w-[71px]" },
  { name: "RK BCA", cls: "w-[70px]", inner: "active" },
  { name: "KK", cls: "w-[40px]", inner: "bg-[#92d050] text-black" },
  { name: "RK Ayo", cls: "w-[68px]", inner: "bg-[#92d050] text-black" },
  { name: "PPN", cls: "w-[50px]", inner: "bg-[#ff0000] text-white" },
  { name: "PK", cls: "w-[44px]" },
  { name: "PM B2", cls: "w-[63px]" },
  { name: "FP DAN FM", cls: "w-[95px]" },
  { name: "EKUALISASI", cls: "w-[95px]" },
  { name: "PPh 21", cls: "w-[66px]", inner: "bg-[#548235] text-white" },
  { name: "Daftar BP21 Karyawan", cls: "w-[160px]", inner: "bg-[#70ad47] text-black" },
];

function SheetTabs() {
  return (
    <div className="flex h-[29px] shrink-0 items-center border-b border-[#c8c6c4] bg-[#e6e6e6] text-[12px] text-[#444]">
      <button aria-label="Previous sheet" className="ml-[26px] w-7">
        <Svg w={8} h={8}>
          <path d="M6 0L1 4l5 4z" fill="#185c37" />
        </Svg>
      </button>
      <button aria-label="Next sheet" className="w-[26px]">
        <Svg w={8} h={8}>
          <path d="M2 0l5 4-5 4z" fill="#185c37" />
        </Svg>
      </button>
      <button aria-label="More sheets" className="h-5 w-[21px] border-r border-[#999] text-left leading-4 font-bold">...</button>
      {sheets.map((s) =>
        s.inner === "active" ? (
          <button key={s.name} className={`h-full shrink-0 pb-1 ${s.cls}`}>
            <span className="flex h-full items-center justify-center border-x border-b-2 border-[#999] border-b-[#217346] bg-linear-to-b from-white to-[#dff0d3] pt-[6px] font-bold text-[#217346]">{s.name}</span>
          </button>
        ) : (
          <button key={s.name} className={`flex h-[22px] shrink-0 items-center border-r border-[#999] whitespace-nowrap ${s.cls} ${s.inner ? "px-[2px]" : "pr-[2px]"}`}>
            <span className={`flex h-full w-full items-center justify-center ${s.inner ?? ""}`}>{s.name}</span>
          </button>
        )
      )}
      <button className="ml-[15px] w-[78px] shrink-0 overflow-hidden text-left whitespace-nowrap">Monitoring M</button>
      <button aria-label="More sheets right" className="ml-[6px] w-[14px] leading-4 font-bold">...</button>
      <button aria-label="New sheet" className="ml-[11px]">
        <Svg w={17} h={17}>
          <circle cx="8.500" cy="8.500" r="7.500" stroke="#777" />
          <path d="M8.500 4.500v8M4.500 8.500h8" stroke="#666" strokeWidth="1.500" />
        </Svg>
      </button>
      <Svg w={2} h={11} className="mx-5">
        <path d="M0 1h2M0 5h2M0 9h2" stroke="#999" strokeWidth="1.500" />
      </Svg>
      <div className="mr-[21px] ml-[-6px] flex h-[15px] min-w-0 flex-1 bg-[#f1f1f1]">
        <ArrowButton dir="left" className="w-[15px]" />
        <div className="h-full w-[76%] border border-l-0 border-[#999] bg-white" />
        <ArrowButton dir="right" className="ml-auto w-[15px]" />
      </div>
    </div>
  );
}

function StatusBar() {
  return (
    <div className="flex h-[22px] shrink-0 items-center border-b border-[#b5b0b0] bg-[#f3f2f1] pl-[7px] text-[11px] text-[#444]">
      <span>Select destination and press ENTER or choose Paste</span>
      <div className="ml-auto flex gap-4 pr-[18px]">
        <span>Average: 158980321,4</span>
        <span>Count: 24</span>
        <span>Sum: 3815527714</span>
      </div>
      <button aria-label="Normal view" className="flex h-full w-10 items-center justify-center bg-[#cfcdcb]">
        <Svg w={14} h={13}>
          <path d="M.5.5h13v12H.5zM.5 4.500h13M.5 8.500h13M4.500.5v12M9.500.5v12" stroke="#444" />
        </Svg>
      </button>
      <button aria-label="Page layout view" className="flex h-full w-10 items-center justify-center">
        <Svg w={14} h={13}>
          <path d="M.5.5h13v12H.5zM3.500 2.500h7v8h-7zM5 4.500h4M5 6.500h4M5 8.500h4" stroke="#444" />
        </Svg>
      </button>
      <button aria-label="Page break preview" className="flex h-full w-10 items-center justify-center">
        <Svg w={14} h={13}>
          <path d="M.5.5h13v12H.5zM4.500.5v7h5v-7M.5 7.500h4" stroke="#444" />
        </Svg>
      </button>
      <button aria-label="Zoom out" className="flex w-[19px] justify-center">
        <Svg w={9} h={9}><path d="M0 4.500h8" stroke="#444" /></Svg>
      </button>
      <input
        type="range"
        aria-label="Zoom"
        min={0}
        max={100}
        defaultValue={42}
        className="h-3 w-[100px] appearance-none bg-[linear-gradient(#666,#666)] bg-[length:100%_1px] bg-center bg-no-repeat [&::-webkit-slider-thumb]:h-[11px] [&::-webkit-slider-thumb]:w-[5px] [&::-webkit-slider-thumb]:appearance-none [&::-webkit-slider-thumb]:bg-[#444]"
      />
      <button aria-label="Zoom in" className="flex w-[19px] justify-center">
        <Svg w={9} h={9}><path d="M0 4.500h9M4.500 0v9" stroke="#444" /></Svg>
      </button>
      <button className="w-[42px] pr-[13px] text-right">85%</button>
    </div>
  );
}

function Task({ label, mark = "dot", children }: { label: string; mark?: "dot" | "none" | "active" } & Kids) {
  return (
    <button aria-label={label} className={`relative flex h-10 w-9 items-center justify-center rounded ${mark === "active" ? "bg-white/70" : ""}`}>
      {children}
      {mark === "dot" && <span className="absolute bottom-0 h-[3px] w-[6px] rounded-full bg-[#857c80]" />}
      {mark === "active" && <span className="absolute bottom-0 h-[3px] w-4 rounded-full bg-[#0f6cbd]" />}
    </button>
  );
}

function Taskbar() {
  return (
    <footer className="relative flex h-[47px] shrink-0 items-center justify-between bg-[linear-gradient(90deg,#e2dade_0%,#e3d9dc_18%,#f0dfd8_22.500%,#e2d9dd_27%,#f0dfd6_33%,#e3d9de_38%,#e6dbdd_45%,#e2d9df_54%,#e0dfea_62%,#e1dfe8_67%,#e3d9dd_72%,#efddd4_78.500%,#e2d8db_84%,#e2d9dd_100%)] text-[12px] text-[#222]">
      <button className="flex items-center gap-[6px] pl-5 text-left leading-4">
        <Svg w={24} h={26}>
          <path d="M1 14C2 8 7 5 12 6c5 1 8 4 8 9-2-2-4-2-6-.5-2-2-4-2-6-.5-2-1.500-5-1.500-7 0z" fill="#3f9be6" />
          <path d="M11 4v18q-1.500 4-4.500 1.500V21" stroke="#666" strokeWidth="1.800" />
          <path d="M10 3l1.500-2M15 3l1.500-2M20 3l1.500-2M18 7l1.500-2M22 8l1.500-2M21 12l1.500-2" stroke="#8fa9c4" strokeWidth="1.500" />
        </Svg>
        <span>
          Hujan sebentar
          <br />
          <span className="text-[#555]">Besok</span>
        </span>
      </button>
      <div className="absolute left-1/2 flex -translate-x-[283px] items-center">
        <button aria-label="Start" className="ml-[6px] w-[37px]">
          <Svg w={24} h={24}>
            <defs>
              <linearGradient id="win" x1="0" y1="0" x2="1" y2="1">
                <stop stopColor="#35b8f5" />
                <stop offset="1" stopColor="#0869d0" />
              </linearGradient>
            </defs>
            <path d="M0 0h11.500v11.500H0zM12.500 0H24v11.500H12.500zM0 12.500h11.500V24H0zM12.500 12.500H24V24H12.500z" fill="url(#win)" />
          </Svg>
        </button>
        <label className="flex h-[31px] w-[218px] items-center rounded-full border border-white/80 bg-[#f8f4f6] pl-[10px] shadow-sm">
          <Svg w={16} h={16}>
            <circle cx="7" cy="6.500" r="5.500" stroke="#222" strokeWidth="1.800" />
            <path d="M11 11l4 4" stroke="#222" strokeWidth="2" />
          </Svg>
          <input aria-label="Cari" placeholder="Cari" className="ml-[9px] w-[134px] bg-transparent text-[12px] outline-none placeholder:text-[#555]" />
          <Svg w={40} h={28}>
            <path d="M1 25c6-3 32-3 38-1-4 3-32 4-38 1z" fill="#dfba84" />
            <path d="M3 8l3-4 1-3 2 2 3 0c2 2 3 4 5 6h9c4 0 6 1 7 4l2 5-1 2-2-4v4l2 5h-2l-3-6-2 1-1 5h-2v-7l-6-1-1 8h-1.500l-.5-7-1 7h-1.500l-1-9-3-7-4 2z" fill="#f1eff1" stroke="#5b5860" strokeWidth=".8" />
            <path d="M6 4l2 3M8 2l2 7M10.500 3l1 9M13 5l-2 7M14.500 7l-2 8M17 9.500l-2 6M19.500 9.500l-1.500 7M22 9.500l-1 7M24.500 9.500l-1 7M27 9.500l-1.500 7M29 10.500l-2 5M31.500 12l-3 4M12 18h3M12 21h3M15.500 18h2M15.500 21h2M24 19h3M29 18h3" stroke="#3d3a44" strokeWidth="1.100" />
            <path d="M3 8l1.500-1.500 1 1.500-1.500 1zM33 14l2 5-1 2" stroke="#2f2c35" fill="#2f2c35" strokeWidth="1" />
          </Svg>
        </label>
        <div className="ml-[7px] flex gap-2">
          <Task label="App">
            <Svg w={24} h={24}>
              <circle cx="12" cy="12" r="11.500" fill="#e02f56" />
              <path d="M10 5.500h4L18 17l-3 .5-3-9-3 9L6 17z" fill="#fff" />
              <path d="M12 12v4" stroke="#fff" strokeWidth="1" />
            </Svg>
          </Task>
          <Task label="File Explorer">
            <Svg w={25} h={24}>
              <path d="M1 2h8l3 3h12v6H1z" fill="#e09b15" />
              <path d="M1 6h8l3-2h12v19H1z" fill="#fbc93b" />
              <path d="M5 23v-5q0-2 2-2h11q2 0 2 2v5z" fill="#1173c7" />
            </Svg>
          </Task>
          <Task label="Chrome" mark="none">
            <Svg w={24} h={24}>
              <circle cx="12" cy="12" r="11.500" fill="#fbbc05" />
              <path d="M2 6.200A11.500 11.500 0 0122 6.200H12A5.800 5.800 0 006.500 13.500z" fill="#ea4335" />
              <path d="M2 6.200a11.500 11.500 0 009.500 17.300l5-8.500a5.500 5.500 0 01-9.500 0z" fill="#34a853" />
              <circle cx="12" cy="12" r="5.600" fill="#fff" />
              <circle cx="12" cy="12" r="4.400" fill="#4285f4" />
            </Svg>
          </Task>
          <Task label="Edge">
            <Svg w={24} h={24}>
              <defs>
                <linearGradient id="edge" x1="0" y1="0" x2="1" y2="0">
                  <stop stopColor="#2aa5dd" />
                  <stop offset="1" stopColor="#5bd35b" />
                </linearGradient>
              </defs>
              <circle cx="12" cy="12" r="11.500" fill="#1462b5" />
              <path d="M.5 11C1.500 4 7 .5 12.500.5c6 0 11 4.500 11 9.500 0 4-3 6-6 6-2 0-3.500-1-3-2 3-4-1-7-5-6.500-4 0-7.500 1.500-9 3.500z" fill="url(#edge)" />
              <path d="M14.500 14c-1 2 2 3.500 5 3 1.500 0 2.500-.7 3.500-1.500-2 3-5 4-7.500 3.500-4-.5-6-4-4.500-7 2-1 4 0 3.500 2z" fill="#e5dce1" />
            </Svg>
          </Task>
          <Task label="Excel" mark="active">
            <Svg w={25} h={24}>
              <path d="M7 1h17v22H7z" fill="#21a366" />
              <path d="M15 1h9v6h-9z" fill="#33c481" />
              <path d="M7 12h17v11H7z" fill="#185c37" />
              <path d="M15 12h9v6h-9z" fill="#107c41" />
              <rect y="6" width="13" height="13" rx="1" fill="#107c41" />
              <path d="M3.500 9l6 7M9.500 9l-6 7" stroke="#fff" strokeWidth="1.800" />
            </Svg>
          </Task>
          <Task label="Calculator">
            <Svg w={18} h={24}>
              <rect width="18" height="24" rx="2" fill="#6b7680" />
              <rect x="2" y="2" width="14" height="5" fill="#40c4ee" />
              <path d="M2 9h4v3.500H2zM7 9h4v3.500H7zM12 9h4v3.500h-4zM2 13.500h4V17H2zM7 13.500h4V17H7zM2 18h4v3.500H2zM7 18h4v3.500H7z" fill="#d5dbe0" />
              <path d="M12 13.500h4v8h-4z" fill="#173f7a" />
            </Svg>
          </Task>
          <Task label="Notepad">
            <Svg w={20} h={25}>
              <path d="M1 2h18v19H1z" fill="#3fc3e4" />
              <path d="M3 0v4M6 0v4M10 0v4M14 0v4M17 0v4" stroke="#2b6f8c" strokeWidth="1.300" />
              <path d="M4 8h12M4 12h12M4 16h8" stroke="#12668c" strokeWidth="1.800" />
              <path d="M1 22h18v2H1z" fill="#9b5a2b" />
            </Svg>
          </Task>
        </div>
      </div>
      <div className="flex items-center pr-5">
        <button aria-label="Show hidden icons" className="w-[29px]">
          <Svg w={11} h={7}><path d="M1 6l4.500-4.500L10 6" stroke="#222" strokeWidth="1.500" /></Svg>
        </button>
        <button aria-label="OneDrive" className="w-9">
          <Svg w={17} h={16}>
            <path d="M4 12.500a3 3 0 010-6 4.500 4.500 0 018.500-1 3.500 3.500 0 01.5 7z" fill="#d5d0d3" stroke="#222" strokeWidth="1.200" />
            <path d="M1 1l15 14" stroke="#222" strokeWidth="1.300" />
          </Svg>
        </button>
        <button className="w-10 text-left">IND</button>
        <button aria-label="Network and volume" className="flex items-center gap-2">
          <Svg w={17} h={17}>
            <path d="M10 1.500H3.500q-2 0-2 2v7q0 2 2 2H13V8M4 16h8M6 12.500V16M10 12.500V16M12 1h4v5h-4zM14 6v7" stroke="#222" strokeWidth="1.200" />
          </Svg>
          <Svg w={15} h={14}>
            <path d="M1 5v4h2.500L7 12V2L3.500 5zM9 5q1.500 2 0 4M11 3q3 4 0 8M12.500 1.500q4 5.500 0 11" stroke="#222" />
          </Svg>
        </button>
        <button className="ml-[10px] w-[70px] text-right leading-4">
          15.28
          <br />
          31/01/2026
        </button>
        <button aria-label="Notifications" className="ml-2">
          <Svg w={15} h={17}>
            <path d="M7.500 1C4 1 2.500 3.500 2.500 6v4L.5 12.500v1h14v-1l-2-2.500V6c0-2.500-1.500-5-5-5zM5.500 14.500q2 2.500 4 0z" fill="#0b3d91" />
          </Svg>
        </button>
      </div>
    </footer>
  );
}

export default function App() {
  return (
    <div className={`flex h-screen flex-col overflow-hidden bg-[#e6e6e6] ${UI}`}>
      <TitleBar />
      <MenuBar />
      <Ribbon />
      <FormulaBar />
      <Sheet />
      <SheetTabs />
      <StatusBar />
      <Taskbar />
    </div>
  );
}
